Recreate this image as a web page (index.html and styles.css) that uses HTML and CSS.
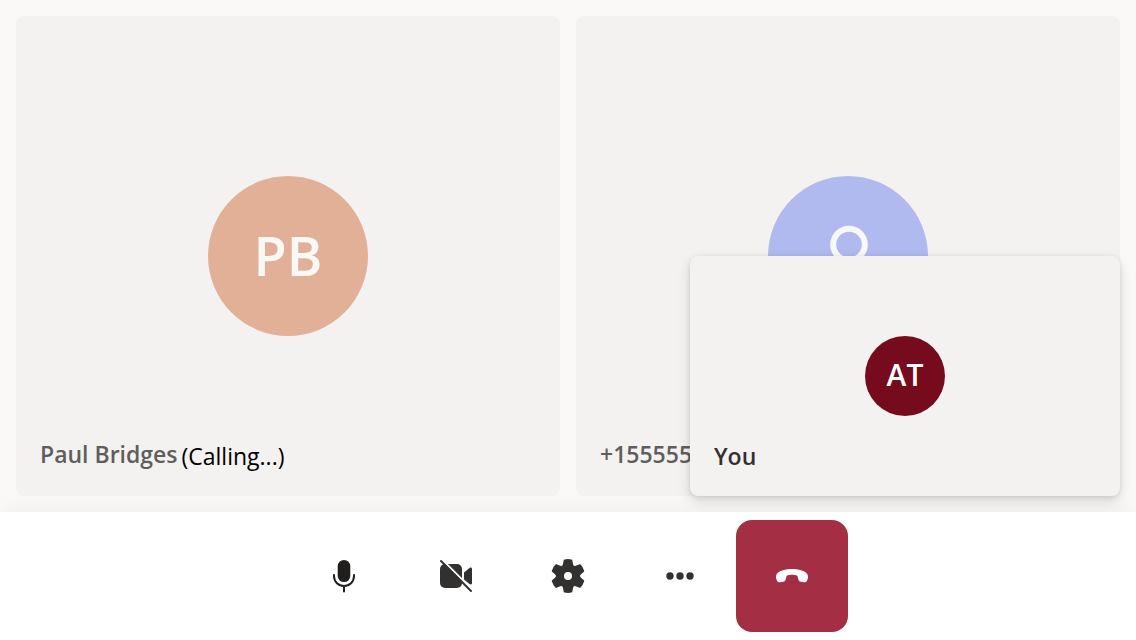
FILE: index.html
```html
<!DOCTYPE html>
<html lang="en">
<head>
<meta charset="utf-8">
<meta name="viewport" content="width=device-width, initial-scale=1">
<title>Call</title>
<link rel="stylesheet" href="styles.css">
</head>
<body>
<main class="gallery">
  <section class="tile">
    <div class="avatar avatar-peach">PB</div>
    <p class="label"><span class="name">Paul Bridges</span><span class="status">(Calling...)</span></p>
  </section>
  <section class="tile">
    <div class="avatar avatar-blue">
      <svg class="person" viewBox="0 0 80 80" aria-hidden="true"><circle cx="41" cy="28.500" r="15.800"/><path d="M15 74v-4q0-13 13-13h26q13 0 13 13v4"/></svg>
    </div>
    <p class="label"><span class="name">+155555</span></p>
  </section>
  <section class="tile local">
    <div class="avatar avatar-local">AT</div>
    <p class="label"><span class="name">You</span></p>
  </section>
</main>
<footer class="controls">
  <button class="control" type="button" aria-label="Mute">
    <svg class="icon icon-mic" viewBox="0 0 48 48" aria-hidden="true"><rect x="17.700" y="8" width="12.600" height="22" rx="6.300"/><path class="line" d="M14 23v1c0 6 4.500 10 10 10s10-4 10-10v-1M24 34v5.500"/></svg>
  </button>
  <button class="control" type="button" aria-label="Turn on camera">
    <svg class="icon" viewBox="0 0 48 48" aria-hidden="true"><rect x="8" y="12" width="22" height="24" rx="5"/><path d="M32 20.500l5.500-4.500c1.200-.9 2.500-.5 2.500 1v14c0 1.500-1.300 1.900-2.500 1L32 27.500z"/><path class="gap" d="M10 7.500L42 39.500"/><path class="line" d="M9 9l30 30"/></svg>
  </button>
  <button class="control" type="button" aria-label="Settings">
    <svg class="icon" viewBox="-2 -2 24 24" aria-hidden="true"><path fill-rule="evenodd" d="M1.910 7.380A8.500 8.500 0 0 1 3.690 4.300a.5.5 0 0 1 .54-.13l1.920.68a1 1 0 0 0 1.320-.76l.36-2a.5.5 0 0 1 .4-.4 8.530 8.530 0 0 1 3.550 0c.2.04.35.2.38.4l.37 2a1 1 0 0 0 1.320.76l1.920-.68a.5.5 0 0 1 .54.13 8.500 8.500 0 0 1 1.780 3.080c.06.2 0 .4-.15.54l-1.560 1.320a1 1 0 0 0 0 1.520l1.560 1.320a.5.5 0 0 1 .15.54 8.500 8.500 0 0 1-1.780 3.080.5.5 0 0 1-.54.13l-1.920-.68a1 1 0 0 0-1.320.76l-.37 2a.5.5 0 0 1-.38.4 8.530 8.530 0 0 1-3.560 0 .5.5 0 0 1-.39-.4l-.36-2a1 1 0 0 0-1.320-.76l-1.920.68a.5.5 0 0 1-.54-.13 8.500 8.500 0 0 1-1.780-3.080.5.5 0 0 1 .15-.54l1.560-1.320a1 1 0 0 0 0-1.520L2.060 7.920a.5.5 0 0 1-.15-.54zM8 10a2 2 0 1 0 4 0 2 2 0 0 0-4 0z"/></svg>
  </button>
  <button class="control" type="button" aria-label="More">
    <svg class="icon" viewBox="0 0 48 48" aria-hidden="true"><circle cx="14" cy="24" r="3.700"/><circle cx="24" cy="24" r="3.700"/><circle cx="34" cy="24" r="3.700"/></svg>
  </button>
  <button class="control control-end" type="button" aria-label="Leave">
    <svg class="icon" viewBox="0 0 48 48" aria-hidden="true"><path d="M24 17c8 0 14.500 2.500 15.700 6 .6 1.700.3 3.700-.5 5.200-.7 1.500-1.700 2.200-3 2l-3.400-.4c-1.200-.2-2-.9-2.300-2l-1.200-4C27.800 23 26 22.700 24 22.700s-3.800.3-5.300 1.100l-1.200 4c-.3 1.100-1.100 1.800-2.300 2l-3.400.4c-1.300.2-2.300-.5-3-2-.8-1.500-1.100-3.500-.5-5.200C9.500 19.500 16 17 24 17z"/></svg>
  </button>
</footer>
</body>
</html>
```
FILE: styles.css
```css
* {
  box-sizing: border-box;
}

body {
  margin: 0;
  min-height: 100vh;
  display: flex;
  flex-direction: column;
  background: #faf9f8;
  font-family: "Segoe UI", "Open Sans", "Noto Sans", sans-serif;
  overflow: hidden;
}

.gallery {
  position: relative;
  flex: 1;
  display: flex;
  gap: 16px;
  padding: 16px;
}

.tile {
  position: relative;
  flex: 1;
  display: flex;
  align-items: center;
  justify-content: center;
  border-radius: 8px;
  background: #f3f2f1;
  overflow: hidden;
}

.local {
  position: absolute;
  right: 16px;
  bottom: 16px;
  width: 430px;
  height: 240px;
  box-shadow: 0 6px 14px rgba(0, 0, 0, 0.13), 0 1px 4px rgba(0, 0, 0, 0.11);
}

.avatar {
  display: flex;
  align-items: center;
  justify-content: center;
  width: 160px;
  height: 160px;
  padding-bottom: 3px;
  border-radius: 50%;
  color: #f8f8f7;
  font-size: 54px;
  line-height: 56px;
  font-weight: 600;
}

.avatar-peach {
  background: #e2b097;
}

.avatar-blue {
  padding: 0;
  background: #b1baef;
}

.avatar-local {
  width: 80px;
  height: 80px;
  background: #750b1c;
  color: #fff;
  font-size: 30px;
  line-height: 32px;
}

.person {
  width: 80px;
  height: 80px;
  fill: none;
  stroke: #f8f8f7;
  stroke-width: 6;
}

.label {
  position: absolute;
  left: 24px;
  bottom: 24px;
  display: flex;
  align-items: flex-end;
  gap: 4px;
  margin: 0;
  font-size: 23px;
  line-height: 32px;
  white-space: nowrap;
}

.name {
  padding-bottom: 2px;
  color: #605e5c;
  font-weight: 600;
}

.status {
  color: #000;
}

.local .name {
  padding-bottom: 0;
  color: #323130;
}

.controls {
  position: relative;
  display: flex;
  justify-content: center;
  padding: 8px;
  background: #fff;
  box-shadow: 0 0 24px rgba(0, 0, 0, 0.05);
}

.control {
  display: flex;
  align-items: center;
  justify-content: center;
  width: 112px;
  height: 112px;
  padding: 0;
  border: 0;
  border-radius: 16px;
  background: transparent;
  color: #323130;
}

.control-end {
  background: #a42e43;
  color: #fff;
}

.icon {
  width: 48px;
  height: 48px;
  fill: currentColor;
}

.icon-mic {
  color: #201f1e;
}

.line {
  fill: none;
  stroke: currentColor;
  stroke-width: 2;
  stroke-linecap: round;
}

.gap {
  fill: none;
  stroke: #fff;
  stroke-width: 2;
}
```
